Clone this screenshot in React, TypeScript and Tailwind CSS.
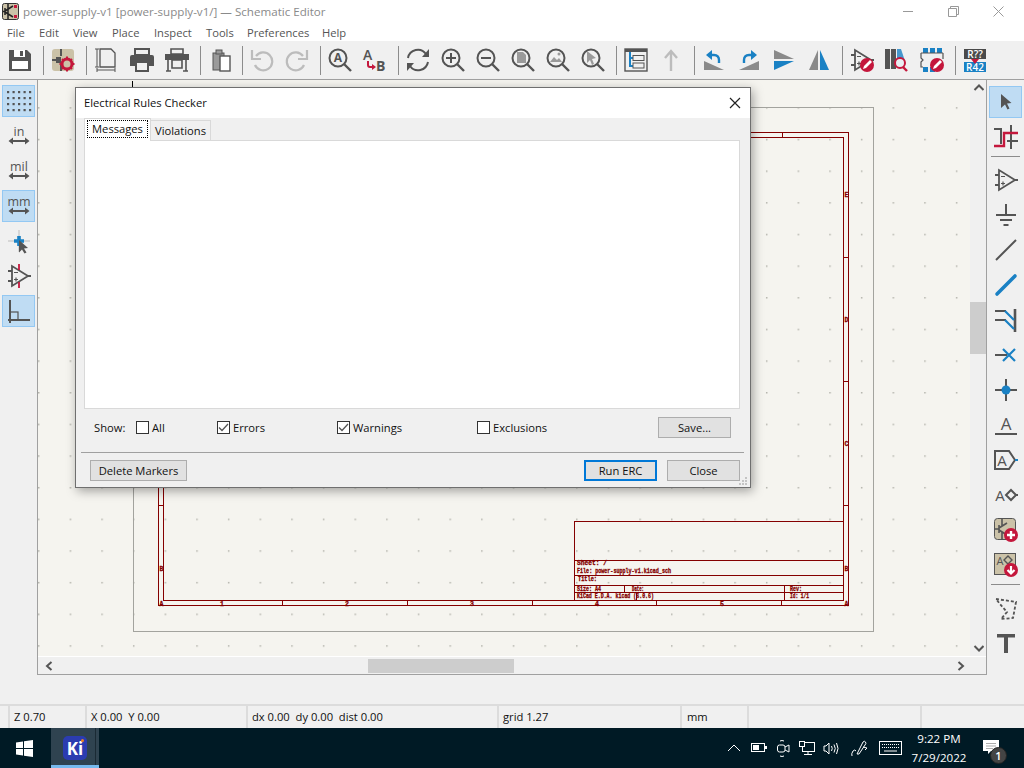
import type { ReactNode } from "react";

const D = "#545454";
const B = "#1a81c4";
const R = "#c4173c";
const G = "#9a9a9a";
const L = "#bcbcbc";
const MONO = "Liberation Mono, monospace";
const FONT = "Open Sans, sans-serif";

function Svg({ children, w = 24, h = 24 }: { children: ReactNode; w?: number; h?: number }) {
  return (
    <svg width={w} height={h} viewBox={`0 0 ${w} ${h}`} fill="none" className="block shrink-0 overflow-visible">
      {children}
    </svg>
  );
}

function Tool({ children }: { children: ReactNode }) {
  return <div className="w-[35px] h-full flex items-center justify-center shrink-0">{children}</div>;
}

function Sep({ className = "ml-[5px] mr-[2px]" }: { className?: string }) {
  return <div className={`w-px h-[29px] bg-[#8c8c8c] shrink-0 ${className}`} />;
}

function Side({ children, active }: { children: ReactNode; active?: boolean }) {
  return (
    <div
      className={`w-[33px] h-[32px] mb-[3px] flex items-center justify-center border shrink-0 ${
        active ? "bg-[#bfdcf3] border-[#93c8f3]" : "border-transparent"
      }`}
    >
      {children}
    </div>
  );
}

function Magnifier({ children }: { children?: ReactNode }) {
  return (
    <Svg>
      <circle cx="10" cy="10" r="8.5" stroke={D} strokeWidth="2" />
      <path d="M16 16l7 7" stroke={D} strokeWidth="2.4" />
      {children}
    </Svg>
  );
}

function OpAmp({ x = 0, red = false }: { x?: number; red?: boolean }) {
  return (
    <g transform={`translate(${x} 0)`}>
      <path d="M5 2v20L21 12z" stroke={D} strokeWidth="1.8" />
      <path d="M1 7h4M1 17h4M21 12h3" stroke={D} strokeWidth="1.8" />
      <path d="M7 8.500h4M7 15.500h4M9 13.500v4" stroke={D} strokeWidth="1.2" />
      {red && <path d="M12 0v6M12 18v6" stroke={R} strokeWidth="1.8" />}
    </g>
  );
}

function EditBadge() {
  return (
    <g>
      <circle cx="17" cy="17" r="7" fill={R} />
      <path d="M13 21l1-3 6-6 2 2-6 6z" fill="#fff" />
    </g>
  );
}

function TopToolbar() {
  return (
    <div className="h-[39px] bg-[#f0f0f0] flex items-center pl-[2.5px] border-b border-[#a0a0a0] shrink-0">
      <Tool>
        <Svg>
          <path d="M1 2h18l4 4v17H1z" fill={D} />
          <rect x="6" y="2" width="11" height="7" fill="#fff" />
          <rect x="12" y="3" width="3" height="5" fill={D} />
          <rect x="4" y="13" width="16" height="8" fill="#fff" />
        </Svg>
      </Tool>
      <Sep />
      <Tool>
        <Svg>
          <rect x="1" y="1" width="22" height="22" rx="3" fill="#cbc2a8" />
          <path d="M10 1v7M10 16v7M1 12h7" stroke={D} strokeWidth="2" />
          <path d="M5 9h5v6H5z" fill={D} />
          <circle cx="16" cy="16" r="5" fill="none" stroke={R} strokeWidth="3" />
          <path d="M16 8.500v3M16 20.500v3M8.500 16h3M20.500 16h3M11 11l2 2M19 19l2 2M21 11l-2 2M13 19l-2 2" stroke={R} strokeWidth="2" />
        </Svg>
      </Tool>
      <Sep />
      <Tool>
        <Svg w={22} h={24}>
          <path d="M5 1h11l4 4v14H5z" stroke={D} strokeWidth="1.300" />
          <path d="M2 1v18M0 1h4M0 19h4M2 22h18M2 20v4M20 20v4" stroke={D} strokeWidth="1" />
        </Svg>
      </Tool>
      <div className="w-px shrink-0" />
      <Tool>
        <Svg>
          <path d="M5 1h14v6H5z" stroke={D} strokeWidth="2" />
          <path d="M0 9q0-2 2-2h20q2 0 2 2v9h-5v-4H5v4H0z" fill={D} />
          <path d="M6 14h12v9H6z" stroke={D} strokeWidth="2" />
        </Svg>
      </Tool>
      <Tool>
        <Svg>
          <path d="M6 1h12v5H6z" stroke={D} strokeWidth="1.600" />
          <path d="M0 6h24v6H0z" fill={D} />
          <path d="M7 12h10v8H7z" stroke={D} strokeWidth="1.600" />
          <path d="M3 12v11M21 12v11M1 23h5M18 23h5" stroke={D} strokeWidth="1.600" />
        </Svg>
      </Tool>
      <Sep className="ml-[5px] mr-[4px]" />
      <Tool>
        <Svg>
          <rect x="3" y="5" width="11" height="17" fill={G} stroke={D} strokeWidth="1" />
          <rect x="6" y="2" width="6" height="4" fill={G} stroke={D} strokeWidth="1" />
          <rect x="10" y="8" width="10" height="15" fill="#fff" stroke={D} strokeWidth="1.400" />
        </Svg>
      </Tool>
      <Sep className="ml-[2px] mr-[2px]" />
      <Tool>
        <Svg>
          <path d="M6 8a9 9 0 1 1-1 9" stroke={L} strokeWidth="2.200" />
          <path d="M2 2v9h9" stroke={L} strokeWidth="2.200" />
        </Svg>
      </Tool>
      <Tool>
        <Svg>
          <path d="M18 8a9 9 0 1 0 1 9" stroke={L} strokeWidth="2.200" />
          <path d="M22 2v9h-9" stroke={L} strokeWidth="2.200" />
        </Svg>
      </Tool>
      <Sep />
      <Tool>
        <Magnifier>
          <text x="10" y="14" textAnchor="middle" fontSize="12" fontFamily={FONT} fontWeight="700" fill={D}>
            A
          </text>
        </Magnifier>
      </Tool>
      <Tool>
        <Svg>
          <text x="0" y="12" fontSize="14" fontFamily={FONT} fontWeight="600" fill={D}>
            A
          </text>
          <text x="13" y="23" fontSize="14" fontFamily={FONT} fontWeight="700" fill={D}>
            B
          </text>
          <path d="M5 13v4q0 2 2 2h4" stroke={R} strokeWidth="2" />
          <path d="M9 16l4 3-4 3z" fill={R} />
        </Svg>
      </Tool>
      <Sep />
      <Tool>
        <Svg>
          <path d="M2 10a10 10 0 0 1 18-4l2 2M22 14a10 10 0 0 1-18 4l-2-2" stroke={D} strokeWidth="2" />
          <path d="M23 1v8h-7zM1 23v-8h7z" fill={D} />
        </Svg>
      </Tool>
      <Tool>
        <Magnifier>
          <path d="M5 10h10M10 5v10" stroke={D} strokeWidth="2" />
        </Magnifier>
      </Tool>
      <Tool>
        <Magnifier>
          <path d="M5 10h10" stroke={D} strokeWidth="2" />
        </Magnifier>
      </Tool>
      <Tool>
        <Magnifier>
          <path d="M6 4h6l3 3v8H6z" fill={G} />
        </Magnifier>
      </Tool>
      <Tool>
        <Magnifier>
          <path d="M4 14l4-5 3 3 2-2 3 4z" fill={G} />
          <circle cx="13" cy="6" r="1.500" fill={G} />
        </Magnifier>
      </Tool>
      <Tool>
        <Magnifier>
          <path d="M6 3l9 7-4 1 2 5-2 1-2-5-3 3z" fill={G} />
        </Magnifier>
      </Tool>
      <Sep />
      <Tool>
        <Svg>
          <rect x="1" y="1" width="22" height="22" stroke={D} strokeWidth="1.400" />
          <rect x="1" y="1" width="22" height="3" fill={D} />
          <path d="M6 4v14h3M6 10h3" stroke={B} strokeWidth="2" />
          <rect x="9" y="7.500" width="11" height="5" stroke={D} />
          <rect x="9" y="15" width="11" height="5" stroke={D} />
        </Svg>
      </Tool>
      <Tool>
        <Svg>
          <path d="M12 23V3M6 10l6-7 6 7" stroke={L} strokeWidth="2.400" />
        </Svg>
      </Tool>
      <Sep />
      <Tool>
        <Svg>
          <path d="M2 13v9h20z" fill="#8a8a8a" />
          <path d="M17 15v-3q0-5-5-5H8" stroke={B} strokeWidth="2.400" />
          <path d="M10 2l-6 5 6 5z" fill={B} />
        </Svg>
      </Tool>
      <Tool>
        <Svg>
          <path d="M22 13v9H2z" fill="#8a8a8a" />
          <path d="M7 15v-3q0-5 5-5h4" stroke={B} strokeWidth="2.400" />
          <path d="M14 2l6 5-6 5z" fill={B} />
        </Svg>
      </Tool>
      <Tool>
        <Svg>
          <path d="M2 2l20 9H2z" fill="#8a8a8a" />
          <path d="M2 13h20L2 22z" fill={B} />
        </Svg>
      </Tool>
      <Tool>
        <Svg>
          <path d="M11 2L2 22h9z" fill="#8a8a8a" />
          <path d="M13 2l9 20h-9z" fill={B} />
        </Svg>
      </Tool>
      <Sep />
      <Tool>
        <Svg>
          <OpAmp />
          <EditBadge />
        </Svg>
      </Tool>
      <Tool>
        <Svg>
          <rect x="0" y="1" width="5" height="20" fill={D} />
          <rect x="6" y="1" width="5" height="20" fill={D} />
          <path d="M12 1h4l4 12h-8z" fill={B} opacity="0.8" />
          <circle cx="15" cy="15" r="5" fill="#e8eef2" stroke={R} strokeWidth="2" />
          <path d="M18 19l4 4" stroke={R} strokeWidth="2.400" />
        </Svg>
      </Tool>
      <Tool>
        <Svg>
          <rect x="3" y="0" width="5" height="5" fill={B} />
          <rect x="10" y="0" width="5" height="5" fill={B} />
          <rect x="17" y="0" width="5" height="5" fill={B} />
          <rect x="3" y="19" width="5" height="5" fill={B} />
          <rect x="10" y="19" width="5" height="5" fill={B} />
          <path d="M1 5h22M1 5v5l2 2-2 2v5h2" stroke={D} strokeWidth="1.200" />
          <path d="M23 5v6" stroke={D} strokeWidth="1.200" />
          <EditBadge />
        </Svg>
      </Tool>
      <Sep />
      <Tool>
        <Svg>
          <rect x="1" y="1" width="22" height="10" fill="#4a4a4a" />
          <rect x="1" y="14" width="22" height="10" fill={B} />
          <text x="12" y="9.500" textAnchor="middle" fontSize="10" fontFamily={FONT} fontWeight="600" fill="#fff">
            R??
          </text>
          <text x="12" y="22.500" textAnchor="middle" fontSize="10" fontFamily={FONT} fontWeight="600" fill="#fff">
            R42
          </text>
          <path d="M8 11h8l-4 5z" fill={R} />
        </Svg>
      </Tool>
    </div>
  );
}

function UnitIcon({ label }: { label: string }) {
  return (
    <Svg>
      <text x="12" y="12" textAnchor="middle" fontSize="12.500" fontFamily={FONT} fill={D}>
        {label}
      </text>
      <path d="M3 17h18" stroke={D} strokeWidth="2" />
      <path d="M6 13.500L1.500 17 6 20.500zM18 13.500l4.500 3.500-4.500 3.500z" fill={D} />
    </Svg>
  );
}

function LeftToolbar() {
  return (
    <div className="w-[37px] shrink-0 bg-[#f0f0f0] flex flex-col items-center pt-[5px]">
      <Side active>
        <Svg w={26} h={24}>
          {[3, 9, 15, 21].flatMap((y) =>
            [2, 7.500, 13, 18.500, 24].map((x) => <rect key={`${x}-${y}`} x={x - 1} y={y - 1} width="2.200" height="2.200" fill={D} />),
          )}
        </Svg>
      </Side>
      <Side>
        <UnitIcon label="in" />
      </Side>
      <Side>
        <UnitIcon label="mil" />
      </Side>
      <Side active>
        <UnitIcon label="mm" />
      </Side>
      <Side>
        <Svg>
          <path d="M12 1v22M1 12h22" stroke={L} strokeWidth="1" />
          <path d="M12 7v10M7 12h10" stroke={B} strokeWidth="3.600" />
          <path d="M12 11l9 8-4 .5 2.500 4-2 1-2.500-4-3 3z" fill={D} />
        </Svg>
      </Side>
      <Side>
        <Svg>
          <OpAmp red />
        </Svg>
      </Side>
      <Side active>
        <Svg>
          <path d="M3 1v23M1 21h22" stroke={D} strokeWidth="2" />
          <rect x="3" y="13" width="8" height="8" stroke={D} strokeWidth="1.200" />
        </Svg>
      </Side>
    </div>
  );
}

function RightToolbar() {
  return (
    <div className="w-[37px] shrink-0 bg-[#f0f0f0] flex flex-col items-center pt-[6px]">
      <Side active>
        <Svg w={12} h={16}>
          <path d="M1 0l10.500 9-4.500 .6 2.500 4.900-2 1-2.500-4.900-4 3.400z" fill={D} />
        </Svg>
      </Side>
      <Side>
        <Svg>
          <path d="M0 4h7v15" stroke={D} strokeWidth="2" />
          <path d="M17 0v24M13 16h11" stroke={D} strokeWidth="2" />
          <path d="M0 21h10V8h14" stroke={R} strokeWidth="2.400" />
        </Svg>
      </Side>
      <div className="w-[29px] h-px bg-[#8c8c8c] mb-[7px]" />
      <Side>
        <Svg>
          <OpAmp />
        </Svg>
      </Side>
      <Side>
        <Svg>
          <path d="M12 1v11M2 12h20M6 17h12M9.500 22h5" stroke={D} strokeWidth="2" />
        </Svg>
      </Side>
      <Side>
        <Svg>
          <path d="M2 22L22 2" stroke={D} strokeWidth="2" />
        </Svg>
      </Side>
      <Side>
        <Svg>
          <path d="M3 21L21 3" stroke={B} strokeWidth="3.600" strokeLinecap="round" />
        </Svg>
      </Side>
      <Side>
        <Svg>
          <path d="M21 1v23" stroke={D} strokeWidth="2.600" />
          <path d="M1 3h11M1 12h11" stroke={D} strokeWidth="2" />
          <path d="M11 3l9 9M11 12l9 9" stroke={B} strokeWidth="2.200" />
        </Svg>
      </Side>
      <Side>
        <Svg w={22} h={16}>
          <path d="M0 8h12" stroke={D} strokeWidth="2" />
          <path d="M8 2l12 12M20 2L8 14" stroke={B} strokeWidth="2.200" />
        </Svg>
      </Side>
      <Side>
        <Svg>
          <path d="M12 1v22M1 12h22" stroke={D} strokeWidth="2" />
          <circle cx="12" cy="12" r="4.500" fill={B} />
        </Svg>
      </Side>
      <Side>
        <Svg>
          <text x="12" y="17" textAnchor="middle" fontSize="17" fontFamily={FONT} fill={D}>
            A
          </text>
          <path d="M1 21h22" stroke={D} strokeWidth="2" />
        </Svg>
      </Side>
      <Side>
        <Svg>
          <path d="M1 3h14l6 9-6 9H1z" stroke={D} strokeWidth="2" />
          <path d="M21 12h3" stroke={B} strokeWidth="2" />
          <text x="8" y="18" textAnchor="middle" fontSize="15" fontFamily={FONT} fill={D}>
            A
          </text>
        </Svg>
      </Side>
      <Side>
        <Svg>
          <text x="6" y="18" textAnchor="middle" fontSize="15" fontFamily={FONT} fill={D}>
            A
          </text>
          <path d="M17 7l5 5-5 5-5-5z" stroke={D} strokeWidth="2" />
          <path d="M22 12h2" stroke={D} strokeWidth="2" />
        </Svg>
      </Side>
      <Side>
        <Svg>
          <rect x="0.500" y="0.500" width="21" height="21" rx="3" fill="#cbc2a8" stroke={D} />
          <path d="M8 1v7M8 14v7M1 11h4M5 7v8M5 10l8-5M5 12l8 5" stroke={D} strokeWidth="1.600" />
          <circle cx="17" cy="17" r="7" fill={R} />
          <path d="M13 17h8M17 13v8" stroke="#fff" strokeWidth="2.400" />
        </Svg>
      </Side>
      <Side>
        <Svg>
          <rect x="0.500" y="0.500" width="21" height="21" fill="#cbc2a8" stroke={D} />
          <text x="6" y="12" textAnchor="middle" fontSize="11" fontFamily={FONT} fill={D}>
            A
          </text>
          <path d="M14 3l4 4-4 4-4-4z" stroke={D} strokeWidth="1.400" />
          <circle cx="17" cy="17" r="7" fill={R} />
          <path d="M17 13v7M13.500 17l3.500 3.500 3.500-3.500" stroke="#fff" strokeWidth="2.200" />
        </Svg>
      </Side>
      <div className="w-[29px] h-px bg-[#8c8c8c] mb-[7px]" />
      <Side>
        <Svg>
          <path d="M2 3l20 3-3 16-12 1 6-7-7-8z" stroke={D} strokeWidth="1.800" strokeDasharray="3 2" />
        </Svg>
      </Side>
      <Side>
        <Svg>
          <path d="M3 3h18v3.500h-7V22h-4V6.500H3z" fill={D} />
        </Svg>
      </Side>
    </div>
  );
}

function Schematic() {
  const red = "#840000";
  const ticksX = [282, 407, 532, 656, 781];
  const ticksY = [257, 381, 505];
  return (
    <svg width="932" height="576" viewBox="38 80 932 576" className="absolute inset-0">
      <defs>
        <pattern id="dots" x="38" y="75.500" width="31.650" height="31.650" patternUnits="userSpaceOnUse">
          <rect x="0" y="0" width="1.500" height="1.500" fill="#b4b4ac" />
        </pattern>
      </defs>
      <rect x="38" y="80" width="932" height="576" fill="url(#dots)" />
      <g shapeRendering="crispEdges" strokeWidth="1" fill="none">
        <rect x="133.500" y="107.500" width="740" height="524" stroke="#a3a39e" />
        <path d="M132.500 81v6" stroke="#000" />
        <g stroke={red}>
          <rect x="158.500" y="132.500" width="690" height="473" />
          <rect x="163.500" y="137.500" width="680" height="463" />
          <rect x="574.500" y="521.500" width="269" height="79" />
          <path d="M574 560.500h270M574 575.500h270M574 585.500h270M574 592.500h270M624.500 585v7M784.500 585v16M636.500 592v8" />
          {ticksX.map((x) => (
            <path key={x} d={`M${x}.500 601v5`} />
          ))}
          <path d="M782.500 132v5" />
          {ticksY.map((y) => (
            <path key={y} d={`M844 ${y}.500h5`} />
          ))}
          <path d="M158 505.500h5" />
        </g>
      </g>
      <g fill={red} stroke={red} strokeWidth="0.300" fontFamily={MONO} fontWeight="700" fontSize="6.500">
        <text x="577" y="565" textLength="30" lengthAdjust="spacingAndGlyphs">Sheet: /</text>
        <text x="577" y="573" textLength="94" lengthAdjust="spacingAndGlyphs">File: power-supply-v1.kicad_sch</text>
        <text x="578" y="581" textLength="19" lengthAdjust="spacingAndGlyphs">Title:</text>
        <text x="577" y="591" textLength="24" lengthAdjust="spacingAndGlyphs">Size: A4</text>
        <text x="632" y="591" textLength="12" lengthAdjust="spacingAndGlyphs">Date:</text>
        <text x="790" y="591" textLength="12" lengthAdjust="spacingAndGlyphs">Rev:</text>
        <text x="577" y="598" textLength="77" lengthAdjust="spacingAndGlyphs">KiCad E.D.A. kicad (6.0.6)</text>
        <text x="790" y="598" textLength="19" lengthAdjust="spacingAndGlyphs">Id: 1/1</text>
        {[1, 2, 3, 4, 5].map((n, i) => (
          <text key={n} x={220 + i * 125} y="605.500">
            {n}
          </text>
        ))}
        <text x="844.500" y="606">A</text>
        <text x="844.500" y="571">B</text>
        <text x="844.500" y="446">C</text>
        <text x="844.500" y="322">D</text>
        <text x="844.500" y="197">E</text>
        <text x="159.500" y="571">B</text>
        <text x="159.500" y="606">A</text>
      </g>
    </svg>
  );
}

function Chevron({ dir }: { dir: "up" | "down" | "left" | "right" }) {
  const d = {
    up: "M1.500 7L6 2.500 10.500 7",
    down: "M1.500 3L6 7.500 10.500 3",
    left: "M7.500 1L3 5l4.500 4",
    right: "M3.500 1L8 5 3.500 9",
  }[dir];
  return (
    <svg width="11" height="10" viewBox="0 0 11 10" fill="none" className="block shrink-0">
      <path d={d} stroke="#555" strokeWidth="2" />
    </svg>
  );
}

function Check({ label, checked, className }: { label: string; checked?: boolean; className: string }) {
  return (
    <div className={`flex items-center gap-[3px] ${className}`}>
      <div className="w-[13px] h-[13px] border border-[#333] bg-white flex items-center justify-center">
        {checked && (
          <svg width="11" height="11" viewBox="0 0 11 11" fill="none">
            <path d="M1 5.500L4 8.500 10 2" stroke="#555" strokeWidth="1.300" />
          </svg>
        )}
      </div>
      <span>{label}</span>
    </div>
  );
}

function DialogButton({ children, className = "border border-[#adadad]" }: { children: ReactNode; className?: string }) {
  return <div className={`h-[21px] w-[73px] flex items-center justify-center bg-[#e1e1e1] ${className}`}>{children}</div>;
}

function ErcDialog() {
  return (
    <div className="absolute left-[75px] top-[87px] w-[676px] h-[401px] bg-[#f0f0f0] border border-[#6f6f6f] shadow-[2px_3px_10px_rgba(0,0,0,0.35)] flex flex-col text-[#111]">
      <div className="h-[30px] bg-white flex items-center justify-between pl-[8px] pr-[9px] shrink-0">
        <span>Electrical Rules Checker</span>
        <svg width="12" height="12" viewBox="0 0 12 12" fill="none">
          <path d="M1 1l10 10M11 1L1 11" stroke="#222" strokeWidth="1.200" />
        </svg>
      </div>
      <div className="h-[22px] flex items-end pl-[8px] shrink-0">
        <div className="relative z-10 w-[67px] h-[23px] bg-white border border-b-0 border-[#d9d9d9] px-[2px] pt-[1px] -mb-px">
          <div className="h-[18px] pb-[1px] border border-dotted border-black flex items-center justify-center">Messages</div>
        </div>
        <div className="w-[60px] h-[20px] bg-[#f0f0f0] border border-b-0 border-l-0 border-[#d9d9d9] flex items-center justify-center">
          Violations
        </div>
      </div>
      <div className="h-[269px] ml-[8px] bg-white border border-[#d9d9d9] w-[656px] shrink-0" />
      <div className="h-[37px] mb-[6px] flex items-center shrink-0">
        <span className="ml-[18px] w-[42px]">Show:</span>
        <Check label="All" className="w-[81px]" />
        <Check label="Errors" checked className="w-[120px]" />
        <Check label="Warnings" checked className="w-[140px]" />
        <Check label="Exclusions" className="w-[181px]" />
        <DialogButton>Save...</DialogButton>
      </div>
      <div className="h-px bg-[#a0a0a0] ml-[5px] w-[663px] shrink-0" />
      <div className="flex items-center mt-[7px] pl-[14px] relative">
        <DialogButton className="!w-[97px] border border-[#adadad]">Delete Markers</DialogButton>
        <DialogButton className="ml-[397px] border-2 border-[#0078d7]">Run ERC</DialogButton>
        <div className="ml-[10px]">
          <DialogButton>Close</DialogButton>
        </div>
        <svg width="9" height="9" viewBox="0 0 9 9" className="absolute right-[2px] top-[17px]">
          <path d="M6 0h2v2H6zM3 3h2v2H3zM6 3h2v2H6zM0 6h2v2H0zM3 6h2v2H3zM6 6h2v2H6z" fill="#c4c4c4" />
        </svg>
      </div>
    </div>
  );
}

function Tray() {
  const w = "#fff";
  return (
    <div className="ml-auto flex items-center h-full text-white text-[11.6px]">
      <svg width="14" height="8" viewBox="0 0 14 8" fill="none" className="mr-[10px]">
        <path d="M1 7l6-6 6 6" stroke={w} strokeWidth="1" />
      </svg>
      <svg width="16" height="10" viewBox="0 0 16 10" fill="none" className="mr-[10px]">
        <rect x="0.500" y="0.500" width="13" height="8" stroke={w} />
        <rect x="2" y="2" width="6" height="5" fill={w} />
        <rect x="14" y="3" width="2" height="3" fill={w} />
      </svg>
      <svg width="13" height="17" viewBox="0 0 13 17" fill="none" className="mr-[9px]">
        <path d="M3 1Q5 0 7 1M3 16Q5 17 7 16" stroke={w} />
        <rect x="0.500" y="5" width="7.500" height="7" rx="2" stroke={w} />
        <path d="M8 7l4-2v7l-4-2" stroke={w} />
      </svg>
      <svg width="16" height="14" viewBox="0 0 16 14" fill="none" className="mr-[8px]">
        <rect x="3.500" y="1.500" width="12" height="9" stroke={w} />
        <path d="M9 11v2M5 13.500h8" stroke={w} />
        <rect x="0.500" y="0.500" width="5" height="5" fill="#001a25" stroke={w} />
      </svg>
      <svg width="16" height="15" viewBox="0 0 16 15" fill="none" className="mr-[12px]">
        <path d="M1 5h2l3-3v11l-3-3H1z" stroke={w} />
        <path d="M8.500 5q1.500 2.500 0 5M11 3.500q2.500 4 0 8M13.500 2q3 5.500 0 11" stroke={w} />
      </svg>
      <svg width="17" height="17" viewBox="0 0 17 17" fill="none" className="mr-[11px]">
        <path d="M6 14L12 2q1.500-1.500 2.500 0t-.5 3L8 14zM1 16q-1-2 1-5 2-2 3 0M12 7l4 1-2 2" stroke={w} />
      </svg>
      <svg width="23" height="14" viewBox="0 0 23 14" fill="none">
        <rect x="0.500" y="0.500" width="22" height="13" stroke={w} />
        <path d="M3 3.500h17M3 6.500h17" stroke={w} strokeDasharray="1 1" />
        <path d="M5 10h13" stroke={w} />
      </svg>
      <div className="w-[74px] flex flex-col items-center leading-[19px] mr-[7px]">
        <span>9:22 PM</span>
        <span>7/29/2022</span>
      </div>
      <div className="relative w-[41px] h-full">
        <svg width="17" height="15" viewBox="0 0 17 15" className="absolute left-[0px] top-[12px]">
          <path d="M0 0h16v11H8l-3 3v-3H0z" fill={w} />
          <path d="M3 3.500h10M3 6h10M3 8.500h7" stroke="#888" strokeWidth="0.700" />
        </svg>
        <div className="absolute left-[7px] top-[19px] w-[17px] h-[17px] rounded-full bg-[#444] border border-[#222] flex items-center justify-center text-[11px] font-semibold">
          1
        </div>
      </div>
    </div>
  );
}

export default function App() {
  return (
    <div
      className="relative w-[1024px] h-[768px] overflow-hidden bg-[#f0f0f0] flex flex-col text-[11.2px] leading-none text-[#111]"
      style={{ fontFamily: FONT }}
    >
      <div className="h-[22px] bg-white flex items-center shrink-0">
        <svg width="17" height="17" viewBox="0 0 17 17" className="ml-[2px] mr-[4px] mt-[1px] shrink-0">
          <rect x="0.500" y="0.500" width="16" height="16" rx="2" fill="#cbc2a8" stroke="#333" />
          <path d="M6 1v15M3 5v7M3 8l8-5M3 9l8 5M1 8.500h2" stroke="#222" strokeWidth="1.500" fill="none" />
          <rect x="12" y="2" width="3" height="3" fill={R} />
          <rect x="12" y="12" width="3" height="3" fill={R} />
        </svg>
        <span className="text-[#8a8a8a] text-[11.6px] pt-[1px]">power-supply-v1 [power-supply-v1/] — Schematic Editor</span>
        <div className="ml-auto flex pr-[3px]">
          <div className="w-[45px] flex justify-center">
            <svg width="11" height="11" viewBox="0 0 11 11">
              <path d="M0 5.500h10" stroke="#999" />
            </svg>
          </div>
          <div className="w-[45px] flex justify-center">
            <svg width="11" height="11" viewBox="0 0 11 11" fill="none">
              <path d="M.5 2.500h8v8h-8zM2.500 2.500V.5h8v8h-2" stroke="#999" />
            </svg>
          </div>
          <div className="w-[45px] flex justify-center">
            <svg width="11" height="11" viewBox="0 0 11 11" fill="none">
              <path d="M.5.500l10 10M10.500.500l-10 10" stroke="#999" />
            </svg>
          </div>
        </div>
      </div>

      <div className="h-[19px] bg-white flex items-center pl-[7px] pt-[2px] text-[#555] shrink-0">
        <span className="w-[32px]">File</span>
        <span className="w-[34px]">Edit</span>
        <span className="w-[39px]">View</span>
        <span className="w-[42px]">Place</span>
        <span className="w-[52px]">Inspect</span>
        <span className="w-[41px]">Tools</span>
        <span className="w-[75px]">Preferences</span>
        <span>Help</span>
      </div>

      <TopToolbar />

      <div className="h-[595px] flex shrink-0">
        <LeftToolbar />
        <div className="w-[950px] border-l border-b border-[#a0a0a0] border-r flex flex-col">
          <div className="flex h-[576px] shrink-0">
            <div className="relative w-[932px] bg-[#f5f4ef] shrink-0">
              <Schematic />
            </div>
            <div className="flex-1 flex flex-col items-center py-[3px]">
              <Chevron dir="up" />
              <div className="w-full mt-[209px] h-[52px] bg-[#cdcdcd]" />
              <div className="mt-auto">
                <Chevron dir="down" />
              </div>
            </div>
          </div>
          <div className="flex-1 flex items-center pl-[6px] border-t border-white">
            <Chevron dir="left" />
            <div className="ml-[313px] w-[146px] h-[14px] bg-[#cdcdcd]" />
            <div className="ml-[441px]">
              <Chevron dir="right" />
            </div>
          </div>
        </div>
        <RightToolbar />
      </div>

      <div className="h-[31px] border-b-2 border-[#dcdcdc] shrink-0" />

      <div className="h-[22px] flex items-center text-[#111] shrink-0">
        <div className="w-[10px] h-full border-r-2 border-[#dcdcdc]" />
        <div className="w-[77px] h-full pl-[4px] flex items-center border-r-2 border-[#dcdcdc]">Z 0.70</div>
        <div className="w-[161px] h-full pl-[4px] flex items-center border-r-2 border-[#dcdcdc]">X 0.00&nbsp; Y 0.00</div>
        <div className="w-[251px] h-full pl-[4px] flex items-center border-r-2 border-[#dcdcdc]">
          dx 0.00&nbsp; dy 0.00&nbsp; dist 0.00
        </div>
        <div className="w-[183px] h-full pl-[4px] flex items-center border-r-2 border-[#dcdcdc]">grid 1.27</div>
        <div className="w-[67px] h-full pl-[5px] flex items-center border-r-2 border-[#dcdcdc]">mm</div>
        <div className="w-[173px] h-full border-r-2 border-[#dcdcdc]" />
      </div>

      <div className="h-[40px] bg-[#001a25] flex items-center shrink-0">
        <div className="w-[51px] flex justify-center pr-[2px]">
          <svg width="17" height="17" viewBox="0 0 17 17">
            <path d="M0 2.500l7-1v6.500H0zM8 1.300L17 0v8H8zM0 9h7v6.500l-7-1zM8 9h9v8l-9-1.300z" fill="#fff" />
          </svg>
        </div>
        <div className="relative w-[48px] h-full bg-[#2f4350] border-b-[3px] border-[#76b9ed] flex items-center justify-center">
          <div className="relative w-[24px] h-[24px] mt-[3px] rounded-[5px] bg-[#2b3cb0] flex items-center justify-center text-white font-bold text-[17px]">
            Ki
            <span className="absolute right-[3px] top-[3px] w-[3px] h-[3px] rounded-full bg-[#f08020]" />
          </div>
          <div className="absolute right-[3px] top-0 bottom-0 w-px bg-[#1a2a34]" />
        </div>
        <Tray />
      </div>

      <ErcDialog />
    </div>
  );
}
